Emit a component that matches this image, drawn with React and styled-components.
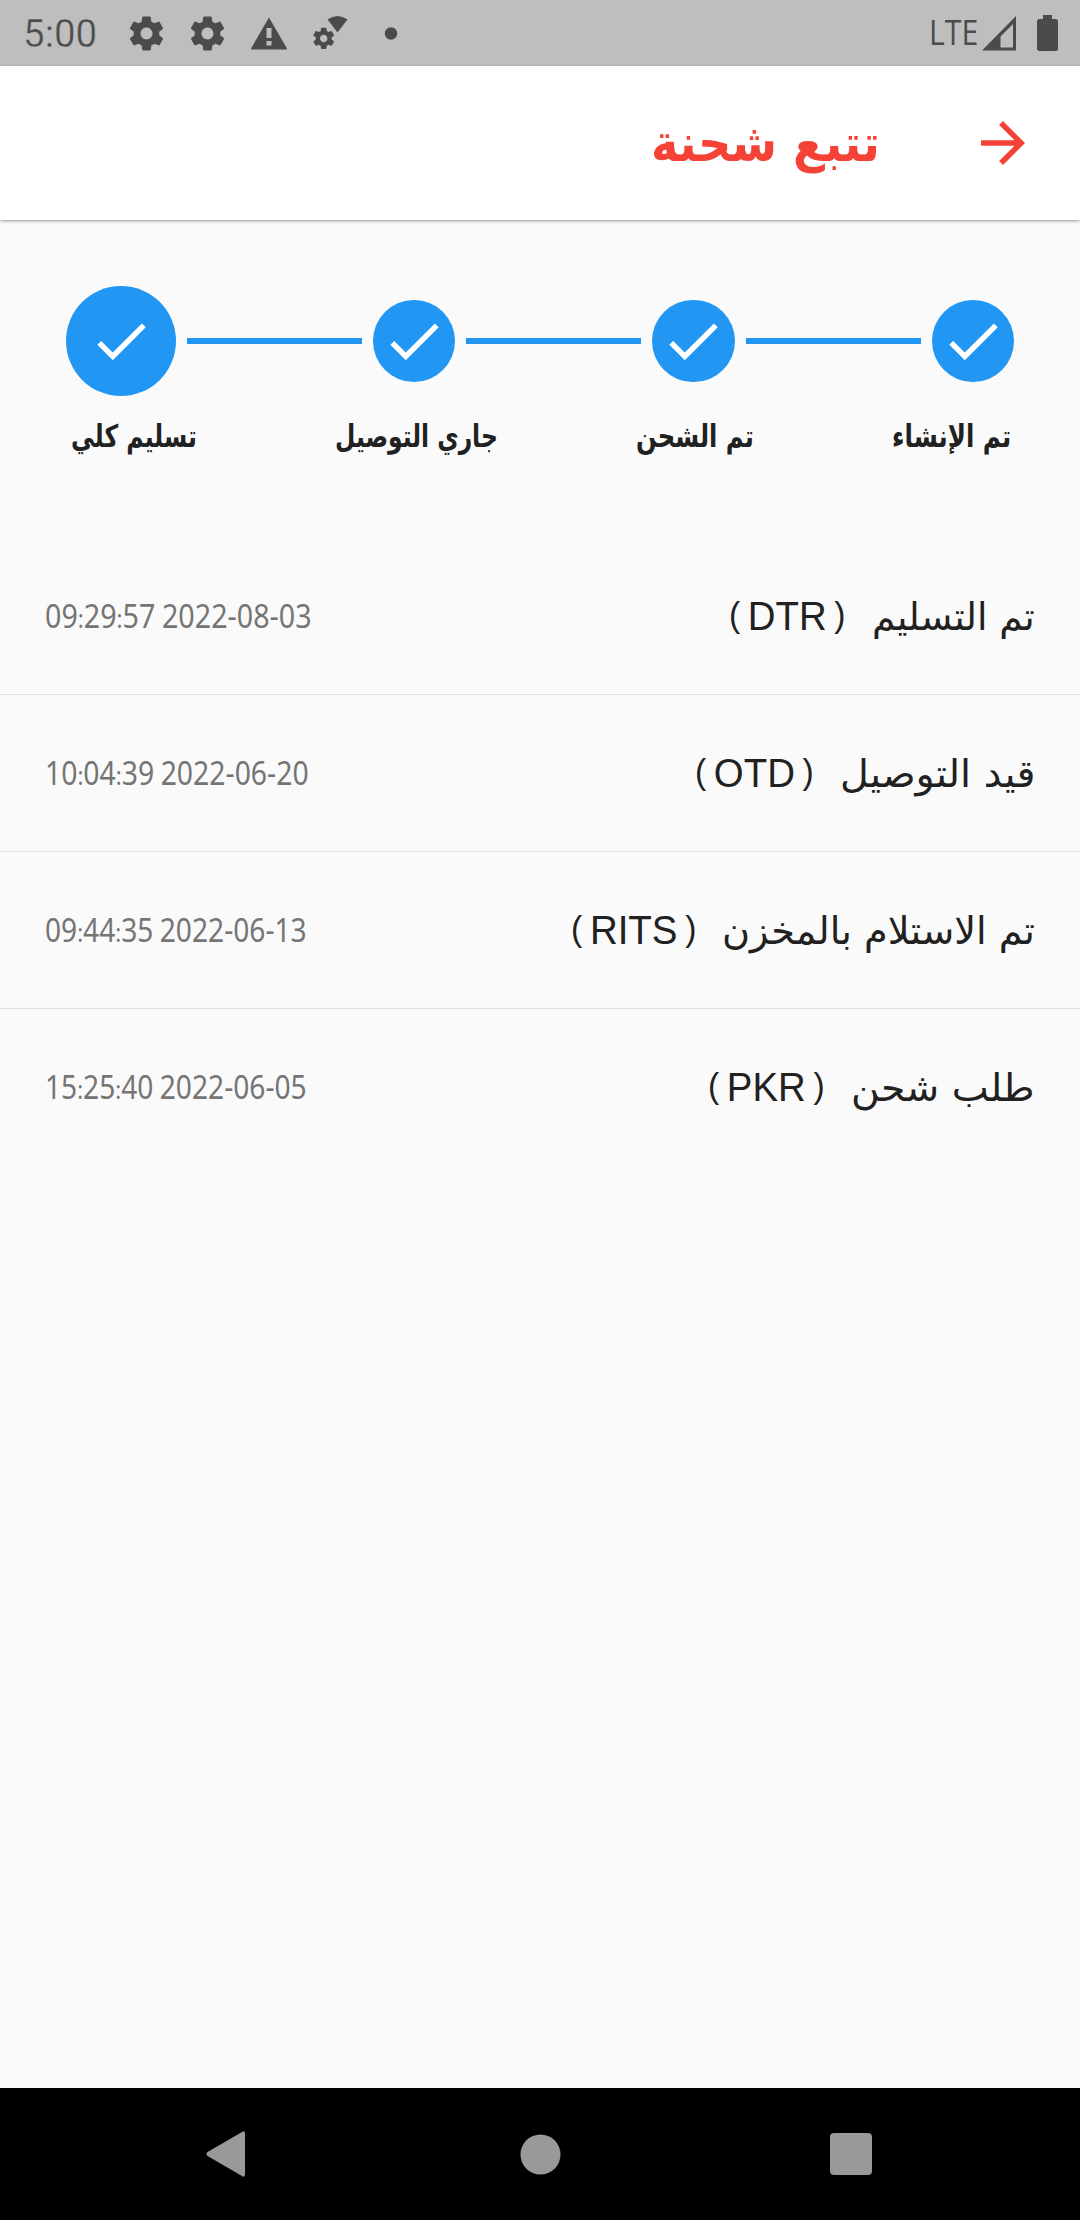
import React, { useLayoutEffect, useRef, useState } from 'react';
import styled, { createGlobalStyle } from 'styled-components';

const GlobalStyle = createGlobalStyle`
  * {
    box-sizing: border-box;
  }

  body {
    margin: 0;
    background: #fafafa;
    font-family: 'DejaVu Sans', sans-serif;
  }

  svg {
    display: block;
    flex: none;
  }
`;

const Screen = styled.div`
  display: flex;
  flex-direction: column;
  width: 1080px;
  height: 2220px;
  overflow: hidden;
  background: #fafafa;
  color: #212121;
`;

const StatusBar = styled.div`
  display: flex;
  flex: none;
  align-items: center;
  justify-content: space-between;
  height: 66px;
  padding: 0 22px 0 23px;
  background: #bebebe;
  color: #4b4b4b;
`;

const StatusGroup = styled.div`
  display: flex;
  align-items: center;
  gap: ${props => props.$gap}px;
`;

const Clock = styled.div`
  margin-right: 9px;
  padding-top: 2px;
  font: 400 39px/64px Roboto, sans-serif;
  -webkit-text-stroke: 0.5px #bebebe;
`;

const Network = styled.div`
  padding-bottom: 3px;
  font: 400 34px/62px 'Open Sans', sans-serif;
`;

const AppBar = styled.header`
  display: flex;
  flex: none;
  align-items: center;
  gap: 90px;
  height: 154px;
  padding: 0 44px;
  background: #fff;
  color: #f44336;
  box-shadow: 0 1px 3px rgba(0, 0, 0, 0.4);
`;

const Title = styled.h1`
  margin: 0;
  font-size: 52px;
  font-weight: 700;
  line-height: 60px;
`;

const Stepper = styled.section`
  flex: none;
  height: 318px;
  padding: 66px 66px 0;
`;

const Track = styled.div`
  display: flex;
  align-items: center;
  gap: 11px;
  height: 110px;
`;

const Bubble = styled.div`
  display: flex;
  flex: none;
  align-items: center;
  justify-content: center;
  width: ${props => (props.$active ? 110 : 82.5)}px;
  height: ${props => (props.$active ? 110 : 82.5)}px;
  border-radius: 50%;
  background: #2196f3;
  color: #fff;
`;

const Line = styled.div`
  flex: 1;
  height: 5.5px;
  background: #2196f3;
`;

const Labels = styled.div`
  display: flex;
  justify-content: space-between;
  margin-top: 19px;
  padding: 0 3px 0 5px;
  font-size: 31px;
  font-weight: 700;
  line-height: 42px;
`;

const List = styled.main`
  flex: 1;
`;

const Row = styled.div`
  display: flex;
  align-items: center;
  justify-content: space-between;
  height: 157px;
  padding: 0 45px;
  border-bottom: 1px solid ${props => (props.$last ? 'transparent' : '#dedede')};
`;

const Status = styled.div`
  display: flex;
  align-items: baseline;
  gap: 26px;
  font-size: 38px;
  line-height: 60px;
`;

const Code = styled.span`
  font-family: 'Liberation Sans', sans-serif;
  font-size: 40px;
`;

const Paren = styled.span`
  display: inline-block;
  margin-${props => props.$side}: 8px;
  font-size: 35px;
  line-height: 40px;
  vertical-align: 3px;
`;

const Time = styled.div`
  padding-top: 2px;
  color: #757575;
  font: 400 32px/60px 'Noto Sans', 'Open Sans', sans-serif;
  word-spacing: -1px;
`;

const Colon = styled.span`
  font-size: 25px;
`;

const NavBar = styled.nav`
  display: flex;
  flex: none;
  align-items: center;
  justify-content: space-between;
  height: 132px;
  padding: 0 208px 0 206px;
  background: #000;
  color: #999;
`;

const HomeIcon = styled.svg`
  margin-left: 5px;
`;

const FitBox = styled.span`
  display: inline-block;
  direction: ltr;
  white-space: nowrap;
`;

const FitInner = styled.span`
  display: inline-block;
  transform-origin: 0 50%;
`;

// squeezes or widens one line of text to a fixed width
const FitText = ({ width, dir = 'rtl', children }) => {
  const inner = useRef(null);
  const [scale, setScale] = useState(1);

  useLayoutEffect(() => {
    setScale(width / inner.current.offsetWidth);
  }, [width]);

  return (
    <FitBox style={{ width }}>
      <FitInner ref={inner} dir={dir} style={{ transform: `scaleX(${scale})` }}>
        {children}
      </FitInner>
    </FitBox>
  );
};

const GEAR =
  'M19.43 12.98c.04-.32.07-.64.07-.98s-.03-.66-.07-.98l2.11-1.65c.19-.15.24-.42.12-.64l-2-3.46c-.12-.22-.39-.3-.61-.22l-2.49 1c-.52-.4-1.08-.73-1.69-.98l-.38-2.65C14.46 2.18 14.25 2 14 2h-4c-.25 0-.46.18-.49.42l-.38 2.65c-.61.25-1.17.59-1.69.98l-2.49-1c-.23-.09-.49 0-.61.22l-2 3.46c-.13.22-.07.49.12.64l2.11 1.65c-.04.32-.07.65-.07.98s.03.66.07.98l-2.11 1.65c-.19.15-.24.42-.12.64l2 3.46c.12.22.39.3.61.22l2.49-1c.52.4 1.08.73 1.69.98l.38 2.65c.03.24.24.42.49.42h4c.25 0 .46-.18.49-.42l.38-2.65c.61-.25 1.17-.59 1.69-.98l2.49 1c.23.09.49 0 .61-.22l2-3.46c.12-.22.07-.49-.12-.64l-2.11-1.65zM12 15.5c-1.93 0-3.5-1.57-3.5-3.5s1.57-3.5 3.5-3.5 3.5 1.57 3.5 3.5-1.57 3.5-3.5 3.5z';

const GearIcon = () => (
  <svg width="41" height="41" viewBox="0 0 24 24" fill="currentColor">
    <path d={GEAR} />
  </svg>
);

const WarningIcon = () => (
  <svg width="36" height="33" viewBox="0 0 36 33" fill="currentColor">
    <path
      fillRule="evenodd"
      d="M18 .5 35.7 31q.5 1.5-1 1.500H1.300Q-.2 32.500.3 31zM15.500 11v10h5V11zm0 13v4.500h5V24z"
    />
  </svg>
);

const GearWifiIcon = () => (
  <svg width="35" height="34" viewBox="0 0 35 34" fill="currentColor">
    <path d="M14.500 3.500Q24.500-3.500 34.500 3.500L24.500 16.500z" />
    <g transform="translate(-2 9.700) scale(1.060)">
      <path d={GEAR} />
    </g>
  </svg>
);

const SignalIcon = () => (
  <svg width="35" height="35" viewBox="0 0 35 35" fill="currentColor">
    <path fillRule="evenodd" d="M34 0v34.500H0zM31 8 18.500 20.500v11H31z" />
  </svg>
);

const BatteryIcon = () => (
  <svg width="21" height="36" viewBox="0 0 21 36" fill="currentColor">
    <path d="M6 0h9v4h3.500Q21 4 21 6.500v27Q21 36 18.500 36h-16Q0 36 0 33.500v-27Q0 4 2.500 4H6z" />
  </svg>
);

const ArrowIcon = () => (
  <svg width="66" height="66" viewBox="0 0 24 24" fill="currentColor">
    <path d="M12 4l-1.410 1.410L16.170 11H4v2h12.170l-5.580 5.590L12 20l8-8z" />
  </svg>
);

const CheckIcon = () => (
  <svg width="66" height="66" viewBox="0 0 24 24" fill="currentColor">
    <path d="M9 16.200L4.800 12l-1.400 1.400L9 19 21 7l-1.400-1.400L9 16.200z" />
  </svg>
);

const steps = [
  { label: 'تم الإنشاء', width: 119 },
  { label: 'تم الشحن', width: 118 },
  { label: 'جاري التوصيل', width: 163 },
  { label: 'تسليم كلي', width: 126, active: true }
];

const events = [
  { status: 'تم التسليم', width: 163, code: 'DTR', codeWidth: 117, time: '09:29:57 2022-08-03', timeWidth: 267 },
  { status: 'قيد التوصيل', width: 195, code: 'OTD', codeWidth: 119, time: '10:04:39 2022-06-20', timeWidth: 264 },
  { status: 'تم الاستلام بالمخزن', width: 313, code: 'RITS', codeWidth: 125, time: '09:44:35 2022-06-13', timeWidth: 262 },
  { status: 'طلب شحن', width: 184, code: 'PKR', codeWidth: 117, time: '15:25:40 2022-06-05', timeWidth: 262 }
];

const App = () => (
  <Screen>
    <GlobalStyle />
    <StatusBar>
      <StatusGroup $gap={23}>
        <StatusGroup $gap={20}>
          <Clock>
            <FitText dir="ltr" width={74}>5:00</FitText>
          </Clock>
          <GearIcon />
          <GearIcon />
        </StatusGroup>
        <StatusGroup $gap={26}>
          <WarningIcon />
          <GearWifiIcon />
          <svg width="34" height="13" viewBox="0 0 34 13" fill="currentColor">
            <circle cx="17" cy="6.500" r="6.200" />
          </svg>
        </StatusGroup>
      </StatusGroup>
      <StatusGroup $gap={20}>
        <StatusGroup $gap={4}>
          <Network>
            <FitText dir="ltr" width={49}>LTE</FitText>
          </Network>
          <SignalIcon />
        </StatusGroup>
        <BatteryIcon />
      </StatusGroup>
    </StatusBar>

    <AppBar dir="rtl">
      <ArrowIcon />
      <Title>
        <FitText width={229}>تتبع شحنة</FitText>
      </Title>
    </AppBar>

    <Stepper dir="rtl">
      <Track>
        {steps.map((step, i) => (
          <React.Fragment key={step.label}>
            {i > 0 && <Line />}
            <Bubble $active={step.active}>
              <CheckIcon />
            </Bubble>
          </React.Fragment>
        ))}
      </Track>
      <Labels>
        {steps.map(step => (
          <FitText key={step.label} width={step.width}>
            {step.label}
          </FitText>
        ))}
      </Labels>
    </Stepper>

    <List dir="rtl">
      {events.map((event, i) => (
        <Row key={event.code} $last={i === events.length - 1}>
          <Status>
            <FitText width={event.width}>{event.status}</FitText>
            <FitText dir="ltr" width={event.codeWidth}>
              <Code>
                <Paren $side="right">(</Paren>
                {event.code}
                <Paren $side="left">)</Paren>
              </Code>
            </FitText>
          </Status>
          <Time>
            <FitText dir="ltr" width={event.timeWidth}>
              {event.time.split(':').map((part, n) => (
                <React.Fragment key={n}>
                  {n > 0 && <Colon>:</Colon>}
                  {part}
                </React.Fragment>
              ))}
            </FitText>
          </Time>
        </Row>
      ))}
    </List>

    <NavBar>
      <svg width="39" height="46" viewBox="0 0 39 46" fill="currentColor">
        <path d="M36 1Q39-1 39 3v40q0 4-3 2L1.500 25Q-.5 23 1.500 21z" />
      </svg>
      <HomeIcon width="41" height="41" viewBox="0 0 41 41" fill="currentColor">
        <circle cx="20.500" cy="20.500" r="20" />
      </HomeIcon>
      <svg width="42" height="42" viewBox="0 0 42 42" fill="currentColor">
        <rect width="42" height="42" rx="4" />
      </svg>
    </NavBar>
  </Screen>
);

export default App;
